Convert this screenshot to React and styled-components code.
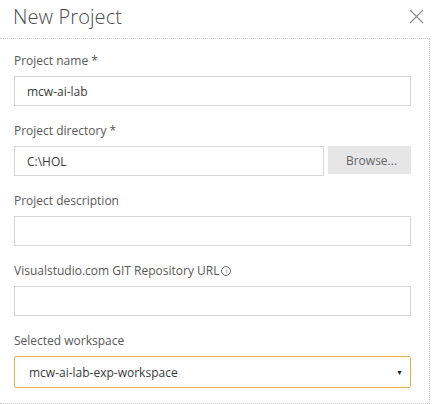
import React, { useState } from "react";
import styled, { createGlobalStyle } from "styled-components";

const GlobalStyle = createGlobalStyle`
  html, body {
    margin: 0;
    padding: 0;
    background: #fff;
  }
  body {
    font-family: "Segoe UI", "Open Sans", "Noto Sans", sans-serif;
    color: #444;
  }
`;

const FIELDS = [
  { id: "name", label: "Project name *", value: "mcw-ai-lab" },
  { id: "dir", label: "Project directory *", value: "C:\\HOL", browse: true },
  { id: "desc", label: "Project description", value: "" },
  { id: "git", label: "Visualstudio.com GIT Repository URL", value: "", info: true },
];

const App = () => {
  const [values, setValues] = useState(
    FIELDS.reduce((acc, f) => ({ ...acc, [f.id]: f.value }), {})
  );

  return (
    <>
      <GlobalStyle />
      <Dialog>
        <Header>
          <Title>New Project</Title>
          <Close aria-label="Close">
            <svg width="15" height="15" viewBox="0 0 15 15">
              <path d="M1 1 L14 14 M14 1 L1 14" stroke="#8a8a8a" strokeWidth="1.1" />
            </svg>
          </Close>
        </Header>
        <Panel>
          {FIELDS.map((f) => (
            <Field key={f.id}>
              <Label htmlFor={f.id}>
                {f.label}
                {f.info && <Info>i</Info>}
              </Label>
              <Row>
                <Input
                  id={f.id}
                  value={values[f.id]}
                  onChange={(e) => setValues({ ...values, [f.id]: e.target.value })}
                />
                {f.browse && <Browse type="button">Browse...</Browse>}
              </Row>
            </Field>
          ))}
          <Field $last>
            <Label htmlFor="ws">Selected workspace</Label>
            <SelectBox>
              <span>mcw-ai-lab-exp-workspace</span>
              <Caret>▼</Caret>
            </SelectBox>
          </Field>
        </Panel>
      </Dialog>
    </>
  );
};

export default App;

const Dialog = styled.div`
  width: 433px;
  height: 404px;
  overflow: hidden;
  display: flex;
  flex-direction: column;
`;

const Header = styled.div`
  height: 45px;
  display: flex;
  align-items: center;
  justify-content: space-between;
  padding: 0 9px 6px 13px;
  box-sizing: border-box;
`;

const Title = styled.h1`
  margin: 0;
  font-size: 20px;
  font-weight: 300;
  color: #4a4a4a;
  letter-spacing: 0.1px;
`;

const Close = styled.button`
  border: none;
  background: none;
  padding: 0;
  width: 15px;
  height: 15px;
  display: flex;
  cursor: pointer;
`;

const Panel = styled.div`
  flex: 1;
  width: 430px;
  box-sizing: border-box;
  padding: 12px 18px 0 14px;
  border-top: 1px dotted #c8c8c8;
  border-right: 1px dotted #c8c8c8;
  border-bottom: 1px dotted #c8c8c8;
`;

const Field = styled.div`
  margin-bottom: 15px;
  margin-top: ${(p) => (p.$last ? "2px" : "0")};
`;

const Label = styled.label`
  display: flex;
  align-items: center;
  height: 18px;
  margin-bottom: 7px;
  font-size: 12px;
  color: #585858;
`;

const Info = styled.span`
  display: inline-flex;
  align-items: center;
  justify-content: center;
  width: 8px;
  height: 8px;
  margin-left: 2px;
  margin-top: 2px;
  border: 1px solid #666;
  border-radius: 50%;
  font-size: 6px;
  line-height: 1;
  color: #666;
`;

const Row = styled.div`
  display: flex;
  gap: 4px;
`;

const Input = styled.input`
  flex: 1;
  min-width: 0;
  height: 30px;
  box-sizing: border-box;
  padding: 0 12px;
  border: 1px solid #d6d6d6;
  border-radius: 0;
  outline: none;
  font-family: inherit;
  font-size: 12px;
  color: #3a3a3a;
  background: #fff;
`;

const Browse = styled.button`
  width: 83px;
  height: 28px;
  border: none;
  background: #e6e6e6;
  font-family: inherit;
  font-size: 12px;
  color: #666;
  padding: 0 0 0 4px;
  cursor: pointer;
`;

const SelectBox = styled.div`
  height: 32px;
  box-sizing: border-box;
  display: flex;
  align-items: center;
  justify-content: space-between;
  padding: 0 7px 0 14px;
  border: 1px solid #e6b24a;
  border-radius: 2px;
  font-size: 12px;
  color: #3a3a3a;
`;

const Caret = styled.span`
  font-size: 7px;
  color: #222;
`;
